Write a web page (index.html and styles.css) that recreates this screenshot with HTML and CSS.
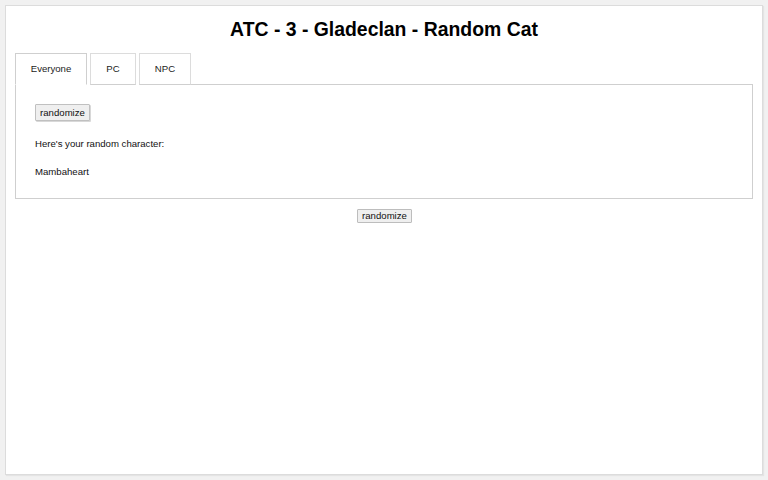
FILE: index.html
```html
<!DOCTYPE html>
<html>
<head>
<meta charset="utf-8">
<title>ATC - 3 - Gladeclan - Random Cat</title>
<link rel="stylesheet" href="styles.css">
</head>
<body>
<div class="page">
  <h1 class="title">ATC - 3 - Gladeclan - Random Cat</h1>
  <div class="tabs">
    <div class="tab tab-everyone active">Everyone</div>
    <div class="tab tab-pc">PC</div>
    <div class="tab tab-npc">NPC</div>
    <div class="tab-fill"></div>
  </div>
  <div class="panel">
    <button class="btn btn-inner">randomize</button>
    <p class="line">Here's your random character:</p>
    <p class="line">Mambaheart</p>
  </div>
  <div class="center">
    <button class="btn btn-outer">randomize</button>
  </div>
</div>
</body>
</html>
```
FILE: styles.css
```css
* { box-sizing: border-box; }
html, body { height: 100%; }
body {
  margin: 0;
  padding: 5px;
  background: #f1f1f1;
  font-family: "Liberation Sans", Arial, sans-serif;
  color: #111;
}
.page {
  height: 470px;
  background: #fff;
  border: 1px solid #dcdcdc;
  box-shadow: 1px 1px 1px rgba(0,0,0,0.05);
  padding: 0 9px;
}
.title {
  margin: 0;
  padding-top: 12px;
  height: 47px;
  font-size: 19.4px;
  font-weight: bold;
  text-align: center;
  line-height: 22px;
  color: #000;
}
.tabs {
  display: flex;
  height: 32px;
}
.tab {
  font-size: 9.6px;
  line-height: 30px;
  text-align: center;
  border: 1px solid #dcdcdc;
  border-bottom: 1px solid #cfcfcf;
  margin-right: 3px;
  background: #fff;
  color: #222;
}
.tab-everyone { width: 72px; }
.tab-pc { width: 46px; }
.tab-npc { width: 52px; }
.tab.active {
  border-color: #cfcfcf;
  border-bottom-color: #fff;
}
.tab-fill {
  flex: 1;
  border-bottom: 1px solid #cfcfcf;
  margin-left: -3px;
}
.panel {
  border: 1px solid #cfcfcf;
  border-top: none;
  padding: 19px 19px 12px;
  height: 114px;
}
.btn {
  font-family: "Liberation Sans", Arial, sans-serif;
  font-size: 9.6px;
  color: #111;
  background: #efefef;
  border: 1px solid #bdbdbd;
  border-radius: 1px;
  padding: 0 4px;
  margin: 0;
  display: block;
}
.btn-inner {
  height: 17px;
  width: 55px;
  box-shadow: 1px 1px 0 #d8d8d8;
  border-color: #c0c0c0;
}
.btn-outer {
  height: 14px;
  width: 55px;
  line-height: 12px;
}
.line {
  margin: 0;
  font-size: 9.6px;
  line-height: 11px;
}
.line:nth-of-type(1) { margin-top: 17px; }
.line:nth-of-type(2) { margin-top: 17px; }
.center {
  display: flex;
  justify-content: center;
  padding-top: 10px;
  padding-left: 1px;
}
```
